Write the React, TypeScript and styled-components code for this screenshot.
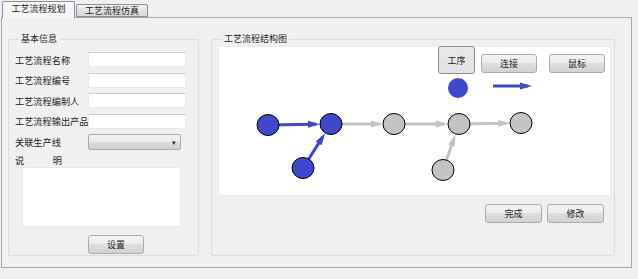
import styled, { createGlobalStyle } from "styled-components";

const GlobalStyle = createGlobalStyle`
  html, body {
    margin: 0;
    padding: 0;
    background: #f0f0f0;
    width: 638px;
    height: 279px;
    overflow: hidden;
  }
  body {
    font-family: "Noto Sans CJK SC", "Noto Sans", sans-serif;
    color: #1e1e1e;
  }
`;

const BLUE = "#3f48cc";
const GRAY = "#c3c3c3";

type Pt = { x: number; y: number };

const nodes: { id: string; x: number; y: number; fill: string }[] = [
  { id: "a", x: 50, y: 79, fill: BLUE },
  { id: "b", x: 113, y: 78, fill: BLUE },
  { id: "c", x: 176, y: 78, fill: GRAY },
  { id: "d", x: 241, y: 78, fill: GRAY },
  { id: "e", x: 303, y: 77, fill: GRAY },
  { id: "f", x: 85, y: 122, fill: BLUE },
  { id: "g", x: 225, y: 124, fill: GRAY },
];

const links: { from: string; to: string; color: string }[] = [
  { from: "a", to: "b", color: BLUE },
  { from: "f", to: "b", color: BLUE },
  { from: "b", to: "c", color: GRAY },
  { from: "c", to: "d", color: GRAY },
  { from: "d", to: "e", color: GRAY },
  { from: "g", to: "d", color: GRAY },
];

// arrow from a to b, tip stops `gap` px before b
function Arrow({ a, b, gap, color }: { a: Pt; b: Pt; gap: number; color: string }) {
  const dx = b.x - a.x;
  const dy = b.y - a.y;
  const len = Math.sqrt(dx * dx + dy * dy);
  const ux = dx / len;
  const uy = dy / len;
  const tip = { x: b.x - ux * gap, y: b.y - uy * gap };
  const base = { x: tip.x - ux * 12, y: tip.y - uy * 12 };
  const hw = 3.5;
  const p1 = `${base.x - uy * hw},${base.y + ux * hw}`;
  const p2 = `${base.x + uy * hw},${base.y - ux * hw}`;
  return (
    <g>
      <line x1={a.x} y1={a.y} x2={tip.x - ux * 4} y2={tip.y - uy * 4} stroke={color} strokeWidth={3} />
      <polygon points={`${tip.x},${tip.y} ${p1} ${p2}`} fill={color} />
    </g>
  );
}

export default function App() {
  const byId = (id: string) => nodes.find((n) => n.id === id)!;
  return (
    <Window>
      <GlobalStyle />
      <TabBar>
        <Tab $active>工艺流程规划</Tab>
        <Tab>工艺流程仿真</Tab>
      </TabBar>
      <Pane>
        <GroupBox $width={191}>
          <Legend>基本信息</Legend>
          <Form>
            <Label>工艺流程名称</Label>
            <Input />
            <Label>工艺流程编号</Label>
            <Input />
            <Label>工艺流程编制人</Label>
            <Input />
            <Label>工艺流程输出产品</Label>
            <Input />
            <Label>关联生产线</Label>
            <Combo>
              <Caret>▾</Caret>
            </Combo>
          </Form>
          <SplitLabel>
            <span>说</span>
            <span>明</span>
          </SplitLabel>
          <Memo />
          <ButtonRow $pad={73}>
            <Button $w={56} $h={19}>设置</Button>
          </ButtonRow>
        </GroupBox>
        <GroupBox $width={404}>
          <Legend>工艺流程结构图</Legend>
          <Canvas>
            <svg width={393} height={150}>
              {links.map((l) => (
                <Arrow key={l.from + l.to} a={byId(l.from)} b={byId(l.to)} gap={11} color={l.color} />
              ))}
              {nodes.map((n) => (
                <ellipse key={n.id} cx={n.x} cy={n.y} rx={11} ry={10.5} fill={n.fill} stroke="#000" strokeWidth={1} />
              ))}
              <circle cx={240} cy={42} r={10} fill={BLUE} />
              <Arrow a={{ x: 275, y: 40 }} b={{ x: 314, y: 40 }} gap={0} color={BLUE} />
            </svg>
            <Toolbar>
              <Button $w={37} $h={28} $pressed>工序</Button>
              <Button $w={56} $h={19} $top={8}>连接</Button>
              <Button $w={56} $h={19} $top={8}>鼠标</Button>
            </Toolbar>
          </Canvas>
          <ButtonRow $end>
            <Button $w={57} $h={19}>完成</Button>
            <Button $w={57} $h={19}>修改</Button>
          </ButtonRow>
        </GroupBox>
      </Pane>
    </Window>
  );
}

const Window = styled.div`
  padding: 1px 0 0 1px;
  width: 638px;
  height: 279px;
  box-sizing: border-box;
`;

const TabBar = styled.div`
  display: flex;
  align-items: flex-end;
  height: 16px;
  padding-left: 1px;
  position: relative;
  z-index: 1;
`;

const Tab = styled.div<{ $active?: boolean }>`
  box-sizing: border-box;
  height: ${(p) => (p.$active ? "17px" : "13px")};
  margin-bottom: ${(p) => (p.$active ? "-1px" : "0")};
  width: ${(p) => (p.$active ? "73px" : "72px")};
  margin-right: ${(p) => (p.$active ? "1px" : "0")};
  border: 1px solid #8c8e94;
  border-bottom: ${(p) => (p.$active ? "none" : "1px solid #8c8e94")};
  border-radius: 2px 2px 0 0;
  background: ${(p) => (p.$active ? "#f6f6f6" : "linear-gradient(#f3f3f3, #e2e2e2 50%, #d6d6d6)")};
  font-size: 9px;
  line-height: ${(p) => (p.$active ? "14px" : "11px")};
  text-align: center;
  white-space: nowrap;
`;

const Pane = styled.div`
  box-sizing: border-box;
  width: 631px;
  height: 251px;
  border: 1px solid #a7a7a7;
  background: #f0f0f0;
  display: flex;
  align-items: flex-start;
  gap: 12px;
  padding: 15px 0 0 6px;
`;

const GroupBox = styled.fieldset<{ $width: number }>`
  box-sizing: border-box;
  width: ${(p) => p.$width}px;
  height: 223px;
  margin: 0;
  padding: 0 0 0 6px;
  border: 1px solid #d5dfe5;
  border-radius: 2px;
  min-width: 0;
`;

const Legend = styled.legend`
  margin-left: 4px;
  padding: 0 2px;
  font-size: 9px;
  line-height: 12px;
`;

const Form = styled.div`
  display: grid;
  grid-template-columns: 73px 98px;
  grid-auto-rows: 15px;
  row-gap: 5.5px;
  align-items: center;
  margin-top: 7px;
`;

const Label = styled.div`
  font-size: 9.2px;
  line-height: 12px;
  white-space: nowrap;
`;

const Input = styled.div`
  box-sizing: border-box;
  height: 15px;
  background: #fff;
  border: 1px solid #e3e9ef;
  border-top-color: #c9ccd2;
`;

const Combo = styled.div`
  box-sizing: border-box;
  width: 93px;
  height: 16px;
  border: 1px solid #acacac;
  border-radius: 2px;
  background: linear-gradient(#f2f2f2, #ebebeb 50%, #dddddd 50%, #cfcfcf);
  display: flex;
  align-items: center;
  justify-content: flex-end;
  padding-right: 4px;
`;

const Caret = styled.span`
  font-size: 7px;
  line-height: 8px;
  color: #222;
`;

const SplitLabel = styled.div`
  display: flex;
  justify-content: space-between;
  width: 47px;
  font-size: 9.2px;
  line-height: 12px;
  margin-top: 5px;
`;

const Memo = styled.div`
  box-sizing: border-box;
  width: 159px;
  height: 60px;
  margin: 1px 0 0 7px;
  background: #fff;
  border: 1px solid #e3e9ef;
`;

const ButtonRow = styled.div<{ $pad?: number; $end?: boolean }>`
  display: flex;
  gap: 5px;
  justify-content: ${(p) => (p.$end ? "flex-end" : "flex-start")};
  padding-left: ${(p) => p.$pad ?? 0}px;
  padding-right: ${(p) => (p.$end ? 10 : 0)}px;
  margin-top: 8px;
`;

const Button = styled.div<{ $w: number; $h: number; $top?: number; $pressed?: boolean }>`
  box-sizing: border-box;
  width: ${(p) => p.$w}px;
  height: ${(p) => p.$h}px;
  margin-top: ${(p) => p.$top ?? 0}px;
  border: 1px solid ${(p) => (p.$pressed ? "#8f8f8f" : "#acacac")};
  border-radius: 3px;
  background: ${(p) =>
    p.$pressed
      ? "linear-gradient(#e8e8e8, #e2e2e2)"
      : "linear-gradient(#f4f4f4, #ececec 50%, #dedede 50%, #d2d2d2)"};
  font-size: 9px;
  display: flex;
  align-items: center;
  justify-content: center;
  color: #222;
`;

const Canvas = styled.div`
  position: relative;
  box-sizing: border-box;
  width: 393px;
  height: 150px;
  margin-top: 1px;
  background: #fff;
  border: 1px solid #ececec;

  svg {
    display: block;
    position: absolute;
    left: -1px;
    top: -1px;
  }
`;

const Toolbar = styled.div`
  position: absolute;
  top: -1px;
  right: 5px;
  display: flex;
  align-items: flex-start;

  & > :nth-child(1) {
    margin-right: 6px;
  }
  & > :nth-child(2) {
    margin-right: 12px;
  }
`;
